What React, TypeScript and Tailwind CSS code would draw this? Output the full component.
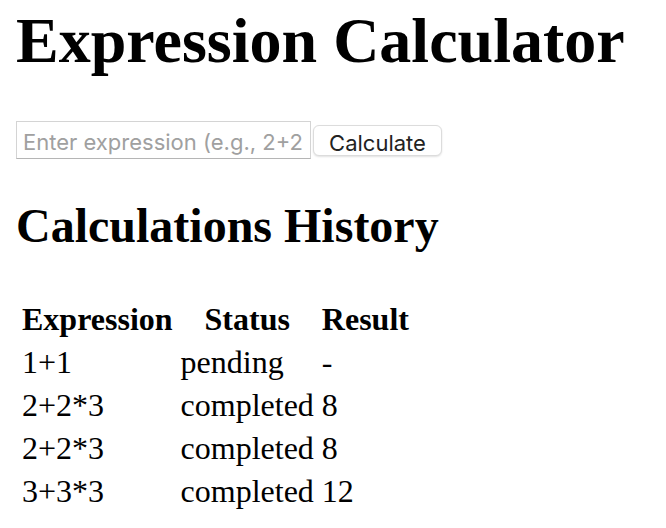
import { useState } from "react";

type Calc = { expression: string; status: string; result: string };

const history: Calc[] = [
  { expression: "1+1", status: "pending", result: "-" },
  { expression: "2+2*3", status: "completed", result: "8" },
  { expression: "2+2*3", status: "completed", result: "8" },
  { expression: "3+3*3", status: "completed", result: "12" },
];

function App() {
  const [expr, setExpr] = useState("");

  return (
    <div className="min-h-screen bg-white px-4 pt-[4px] text-black font-['Liberation_Serif',serif]">
      <h1 className="text-[64px] font-bold leading-[74px]">Expression Calculator</h1>

      <div className="mt-[43px] flex items-center gap-[2px]">
        <input
          value={expr}
          onChange={(e) => setExpr(e.target.value)}
          placeholder="Enter expression (e.g., 2+2*3)"
          className="h-[38px] w-[295px] border border-[#d4d4d4] border-b-[#b5b5b5] bg-white px-[6px] pt-[3px] text-[22px] font-['Inter',sans-serif] placeholder:text-[#a0a0a0] outline-none"
        />
        <button className="h-[31px] w-[129px] rounded-[6px] border border-[#dcdcdc] bg-white pt-[1px] text-[22px] text-[#222] font-['Inter',sans-serif] shadow-[0_1px_2px_rgba(0,0,0,0.12)]">
          Calculate
        </button>
      </div>

      <h2 className="mt-[39px] text-[48px] font-bold leading-[55px]">Calculations History</h2>

      <table className="mt-[43px] border-separate border-spacing-[4px] text-[32px] leading-[35px]">
        <thead>
          <tr>
            <th className="p-[2px] text-center font-bold">Expression</th>
            <th className="p-[2px] text-center font-bold">Status</th>
            <th className="p-[2px] text-center font-bold">Result</th>
          </tr>
        </thead>
        <tbody>
          {history.map((c, i) => (
            <tr key={i}>
              <td className="p-[2px] text-left">{c.expression}</td>
              <td className="p-[2px] text-left">{c.status}</td>
              <td className="p-[2px] text-left">{c.result}</td>
            </tr>
          ))}
        </tbody>
      </table>
    </div>
  );
}

export default App;
